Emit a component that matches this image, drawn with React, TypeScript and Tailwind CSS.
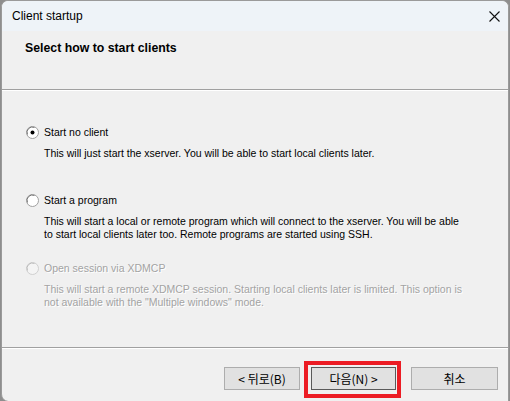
import React from "react";

const sans = "font-['Liberation_Sans',Arial,sans-serif]";
const kr = "font-['Noto_Sans_CJK_KR','Liberation_Sans',sans-serif]";

function Radio({ checked, disabled }: { checked?: boolean; disabled?: boolean }) {
  return (
    <svg width="13" height="13" viewBox="0 0 13 13" className="shrink-0">
      <circle cx="6.5" cy="6.5" r="6" fill={disabled ? "#f4f4f4" : "#ffffff"} stroke={disabled ? "#cfcfcf" : "#a0a0a0"} strokeWidth="1" />
      <path d="M1.5 8.5 A5.3 5.3 0 0 1 8.5 1.5" fill="none" stroke={disabled ? "#bdbdbd" : "#7a7a7a"} strokeWidth="1" />
      {checked && <circle cx="6.5" cy="6.5" r="2" fill="#000" />}
    </svg>
  );
}

function Option({
  label,
  lines,
  checked,
  disabled,
  minLines,
  className,
}: {
  label: string;
  lines: string[];
  checked?: boolean;
  disabled?: boolean;
  minLines?: number;
  className?: string;
}) {
  const txt = disabled ? "text-[#a3a3a3] [text-shadow:1px_1px_0_#ffffff]" : "text-black";
  return (
    <div className={className}>
      <div className="flex items-center h-[16px] gap-[5px]">
        <Radio checked={checked} disabled={disabled} />
        <span className={`text-[10.5px] leading-[16px] ${txt}`}>{label}</span>
      </div>
      <div className={`pl-[18px] mt-[7px] text-[10.5px] leading-[13px] ${txt} ${minLines === 2 ? "min-h-[26px]" : ""}`}>
        {lines.map((l, i) => (
          <div key={i} className="whitespace-nowrap">{l}</div>
        ))}
      </div>
    </div>
  );
}

function Btn({ children, def, w }: { children: React.ReactNode; def?: boolean; w: string }) {
  return (
    <div
      className={`h-[23px] ${w} flex items-center justify-center bg-[#e1e1e1] border ${def ? "border-[#5a5a5a]" : "border-[#adadad]"} text-[12px] text-black ${kr}`}
    >
      {children}
    </div>
  );
}

export default function App() {
  return (
    <div className={`w-[510px] h-[401px] bg-[#8e8e8e] relative overflow-hidden ${sans}`}>
      <div className="ml-px w-[508px] h-[401px] bg-[#f0f0f0] rounded-t-[7px] rounded-bl-[7px] border border-[#9a9a9a] border-b-0 overflow-hidden flex flex-col">
        {/* title bar */}
        <div className="h-[30px] bg-[#eef3f8] flex items-center justify-between pl-[10px] pr-[7px] shrink-0">
          <span className="text-[12px] text-black leading-none">Client startup</span>
          <svg width="11" height="11" viewBox="0 0 11 11" className="mr-[1px]">
            <path d="M0.5 0.5 L10.5 10.5 M10.5 0.5 L0.5 10.5" stroke="#111" strokeWidth="1.1" />
          </svg>
        </div>
        {/* header */}
        <div className="h-[58px] pl-[23px] pt-[9px] shrink-0">
          <div className="text-[12.3px] font-bold leading-[16px] text-black">Select how to start clients</div>
        </div>
        <div className="h-px bg-[#a0a0a0] shrink-0" />
        <div className="h-px bg-white shrink-0" />
        {/* content */}
        <div className="flex-1 pl-[24px] pt-[33px]">
          <Option
            label="Start no client"
            checked
            minLines={2}
            lines={["This will just start the xserver. You will be able to start local clients later."]}
          />
          <Option
            className="mt-[19px]"
            label="Start a program"
            lines={[
              "This will start a local or remote program which will connect to the xserver. You will be able",
              "to start local clients later too. Remote programs are started using SSH.",
            ]}
          />
          <Option
            className="mt-[19px]"
            label="Open session via XDMCP"
            disabled
            lines={[
              "This will start a remote XDMCP session. Starting local clients later is limited. This option is",
              "not available with the \"Multiple windows\" mode.",
            ]}
          />
        </div>
        <div className="h-px bg-[#a0a0a0] shrink-0" />
        <div className="h-px bg-white shrink-0" />
        {/* footer */}
        <div className="h-[52px] shrink-0 flex items-start justify-end pt-[18px] pr-[10px]">
          <Btn w="w-[76px]">&lt; 뒤로(B)</Btn>
          <div className="w-[11px]" />
          <Btn w="w-[85px]" def>다음(N) &gt;</Btn>
          <div className="w-[15px]" />
          <Btn w="w-[87px]">취소</Btn>
        </div>
      </div>
      {/* red highlight annotation */}
      <div className="absolute left-[304px] top-[361px] w-[97px] h-[37px] border-[4px] border-[#ec1c24]" />
    </div>
  );
}
